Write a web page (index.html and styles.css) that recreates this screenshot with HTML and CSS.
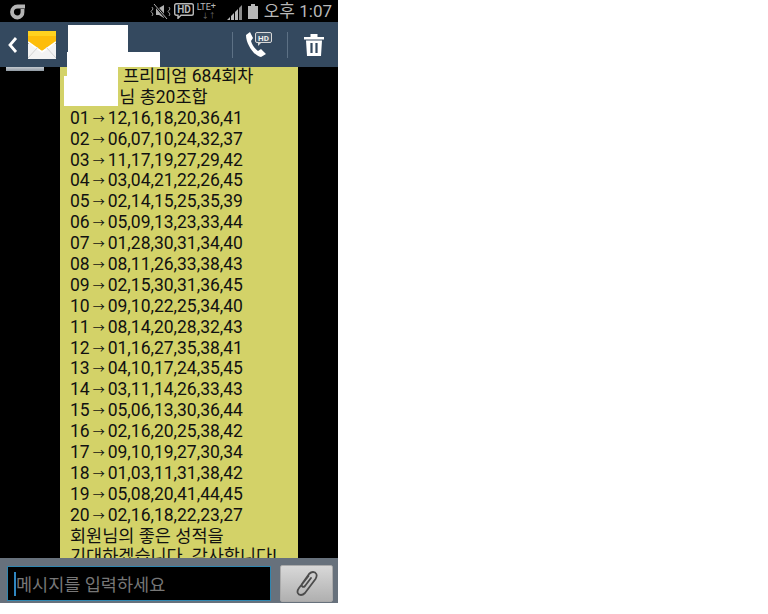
FILE: index.html
```html
<!DOCTYPE html>
<html lang="ko">
  <head>
    <meta charset="UTF-8" />
    <meta name="viewport" content="width=device-width, initial-scale=1.0" />
    <title>메시지</title>
    <link rel="stylesheet" href="styles.css">
  </head>

  <body>
    <div class="phone">
      <div class="status_bar">
        <svg class="carrier" width="18" height="17" viewBox="0 0 18 17">
          <path d="M16 3.500H8.500A5.500 5.500 0 0 0 3 9A5.500 5.500 0 0 0 8.500 14.500A5.200 5.200 0 0 0 13.500 9V6" fill="none" stroke="#b4b4b4" stroke-width="3.800" />
        </svg>
        <div class="status_icons">
          <svg class="mute" width="21" height="15" viewBox="0 0 21 15">
            <path d="M6 4H9L14 1V14L9 11H6Z" fill="#b0b0b0" />
            <path d="M4 0L17 15" stroke="#000" stroke-width="2.600" />
            <path d="M4 0L17 15" stroke="#b0b0b0" stroke-width="1" />
            <path d="M2 3L3 5L1 7.500L3 10L2 12M19 3L20 5L18 7.500L20 10L19 12" fill="none" stroke="#999" />
          </svg>
          <svg class="hd_badge" width="20" height="16" viewBox="0 0 20 16">
            <path d="M2.500 .7H17.500Q19.300 .7 19.300 2.500V10.500Q19.300 12.300 17.500 12.300H7L4 15.300V12.300H2.500Q.7 12.300 .7 10.500V2.500Q.7 .7 2.500 .7Z" fill="none" stroke="#b8b8b8" stroke-width="1.400" />
            <text x="10" y="10.400" class="hd_text">HD</text>
          </svg>
          <span class="lte">LTE<sup>+</sup><i>↓↑</i></span>
          <svg class="signal" width="16" height="15" viewBox="0 0 16 15">
            <path d="M0 15L3 12V15ZM4 15V11L7 8V15Z" fill="#b8b8b8" />
            <path d="M8 15V7L11 4V15Z" fill="#b8b8b8" />
            <path d="M12 15V3L15 0V15Z" fill="#8a8a8a" />
          </svg>
          <svg class="battery" width="10" height="15" viewBox="0 0 10 15">
            <path d="M3 0H7V2H10V15H0V2H3Z" fill="#b8b8b8" />
          </svg>
          <span class="clock">오후 1:07</span>
        </div>
      </div>

      <div class="header">
        <svg class="back" width="11" height="18" viewBox="0 0 11 18">
          <path d="M9 2L3 9L9 16" fill="none" stroke="#fff" stroke-width="2.800" />
        </svg>
        <svg class="mail" width="28" height="28" viewBox="0 0 28 28">
          <path d="M0 13L14 4L28 13V28H0Z" fill="#f3f3f3" />
          <path d="M0 0H28V12L14 20L0 12Z" fill="#fdbd0a" />
          <path d="M0 0H28V5H0Z" fill="#ffd21f" />
          <path d="M0 11L14 21L28 11" fill="none" stroke="#fff" stroke-width="1.600" />
          <path d="M0 27L10 16M28 27L18 16" fill="none" stroke="#d2d2d2" />
        </svg>
        <div class="actions">
          <span class="divider"></span>
          <svg class="call" width="27" height="27" viewBox="0 0 27 27">
            <path d="M0 4L4 1L7 7L5 10C6 14 9 18 12 20L15 18L20 23L15 26C8 25 0 13 0 4Z" fill="#fff" />
            <rect x="9.500" y="1.500" width="16" height="10" rx="1.500" fill="#46596c" stroke="#d8d8d8" />
            <path d="M12 12L12 15L15 12Z" fill="#d8d8d8" />
            <text x="17.500" y="9.500" class="call_hd">HD</text>
          </svg>
          <span class="divider divider_right"></span>
          <svg class="trash" width="20" height="22" viewBox="0 0 20 22">
            <path d="M0 3H6.500V0H13.500V3H20V5.500H0ZM2 6.500H18L17 22H3Z" fill="#fff" />
            <path d="M7.500 9V19M12.500 9V19" stroke="#34495f" stroke-width="2.200" />
          </svg>
        </div>
      </div>

      <div class="thread">
        <div class="avatar"></div>
        <div class="bubble">
          <p class="first_line">프리미엄 684회차</p>
          <p class="second_line">회원님 총20조합</p>
          <p>01<b>→</b>12,16,18,20,36,41</p>
          <p>02<b>→</b>06,07,10,24,32,37</p>
          <p>03<b>→</b>11,17,19,27,29,42</p>
          <p>04<b>→</b>03,04,21,22,26,45</p>
          <p>05<b>→</b>02,14,15,25,35,39</p>
          <p>06<b>→</b>05,09,13,23,33,44</p>
          <p>07<b>→</b>01,28,30,31,34,40</p>
          <p>08<b>→</b>08,11,26,33,38,43</p>
          <p>09<b>→</b>02,15,30,31,36,45</p>
          <p>10<b>→</b>09,10,22,25,34,40</p>
          <p>11<b>→</b>08,14,20,28,32,43</p>
          <p>12<b>→</b>01,16,27,35,38,41</p>
          <p>13<b>→</b>04,10,17,24,35,45</p>
          <p>14<b>→</b>03,11,14,26,33,43</p>
          <p>15<b>→</b>05,06,13,30,36,44</p>
          <p>16<b>→</b>02,16,20,25,38,42</p>
          <p>17<b>→</b>09,10,19,27,30,34</p>
          <p>18<b>→</b>01,03,11,31,38,42</p>
          <p>19<b>→</b>05,08,20,41,44,45</p>
          <p>20<b>→</b>02,16,18,22,23,27</p>
          <p>회원님의 좋은 성적을</p>
          <p>기대하겠습니다. 감사합니다!</p>
        </div>
      </div>

      <!-- white blots hiding the sender -->
      <div class="redact redact_name"></div>
      <div class="redact redact_number"></div>
      <div class="redact redact_line_one"></div>
      <div class="redact redact_line_two"></div>

      <div class="composer">
        <div class="message_input"><span class="cursor"></span>메시지를 입력하세요</div>
        <div class="attach">
          <svg width="22" height="25" viewBox="0 0 22 25">
            <path d="M12.500 5L3 17C0 21 2 24 5 24C7 24 8 23 9 22L19.500 8C22 4 20 1 17 1C15 1 14 2 13 3L6 13C5 15 7 17 9 15L15 7" fill="none" stroke="#4c4c4c" stroke-width="1.800" stroke-linecap="round" />
          </svg>
        </div>
      </div>
    </div>
  </body>
</html>
```

FILE: styles.css
```css
html,
body {
  margin: 0;
  background-color: white;
}

.phone {
  position: relative;
  display: flex;
  flex-direction: column;
  width: 338px;
  height: 603px;
  overflow: hidden;
  background-color: black;
  font-family: Roboto, "Noto Sans CJK KR", sans-serif;
}

.status_bar {
  display: flex;
  align-items: center;
  justify-content: space-between;
  height: 22px;
  padding: 0 6px 0 9px;
  flex-shrink: 0;
}

.status_icons {
  display: flex;
  align-items: center;
  color: #b8b8b8;
}

.hd_badge {
  margin-left: 3px;
}

.hd_text {
  font-size: 10px;
  font-weight: bold;
  text-anchor: middle;
  fill: #b8b8b8;
}

.lte {
  position: relative;
  width: 25px;
  height: 18px;
  margin-left: 3px;
  font-size: 9px;
  line-height: 11px;
}

.lte sup {
  font-size: 9px;
  line-height: 0;
  vertical-align: 1px;
}

.lte i {
  position: absolute;
  top: 9px;
  left: 5px;
  font-size: 7px;
  font-style: normal;
  color: #777;
}

.signal {
  margin: 2px 0 0 5px;
}

.battery {
  margin-left: 5px;
}

.clock {
  margin-left: 6px;
  font-size: 17px;
  line-height: 22px;
  color: #b8b8b8;
}

.header {
  display: flex;
  align-items: center;
  height: 45px;
  padding: 0 14px 0 7px;
  flex-shrink: 0;
  background-color: #34495f;
}

.mail {
  margin-left: 10px;
}

.actions {
  display: flex;
  align-items: center;
  margin-left: auto;
}

.divider {
  width: 1px;
  height: 26px;
  background-color: #5d7185;
}

.call {
  margin: 0 14px 0 13px;
}

.divider_right {
  margin-right: 16px;
}

.call_hd {
  font-size: 8px;
  font-weight: bold;
  text-anchor: middle;
  fill: #eee;
}

.thread {
  position: relative;
  flex: 1;
  min-height: 0;
  overflow: hidden;
}

.avatar {
  position: absolute;
  top: 0;
  left: 6px;
  width: 38px;
  height: 4px;
  background: linear-gradient(#c4cad0, #8f99a3);
}

.bubble {
  width: 238px;
  margin: -1px 0 0 60px;
  box-sizing: border-box;
  padding-left: 10px;
  background-color: #d3d268;
  color: #111;
  font-size: 17.500px;
  line-height: 20.900px;
}

.bubble p {
  height: 20.900px;
  margin: 0;
  white-space: nowrap;
}

.bubble b {
  margin: 0 3px;
  font-size: 12px;
  font-weight: normal;
  line-height: 0;
}

.bubble .first_line {
  padding-left: 53px;
}

.bubble .second_line {
  padding-left: 17px;
}

.redact {
  position: absolute;
  background-color: white;
}

.redact_name {
  top: 25px;
  left: 68px;
  width: 60px;
  height: 28px;
}

.redact_number {
  top: 52px;
  left: 67px;
  width: 93px;
  height: 15px;
}

.redact_line_one {
  top: 67px;
  left: 67px;
  width: 51px;
  height: 23px;
}

.redact_line_two {
  top: 76px;
  left: 64px;
  width: 54px;
  height: 30px;
}

.composer {
  display: flex;
  justify-content: space-between;
  height: 45px;
  box-sizing: border-box;
  padding: 7px 5px 0 7px;
  flex-shrink: 0;
  background-color: #67717c;
}

.message_input {
  display: flex;
  align-items: center;
  width: 264px;
  height: 35px;
  margin-top: 1px;
  box-sizing: border-box;
  padding-left: 6px;
  border: 1px solid #2f86b0;
  background-color: black;
  color: #777;
  font-size: 17.500px;
}

.cursor {
  width: 2px;
  height: 24px;
  background-color: #2f86c0;
}

.attach {
  display: flex;
  align-items: center;
  justify-content: center;
  width: 53px;
  height: 37px;
  box-sizing: border-box;
  border: 1px solid #aaa;
  border-radius: 2px;
  background: linear-gradient(#d8d8d8, #b0b0b0);
}
```
